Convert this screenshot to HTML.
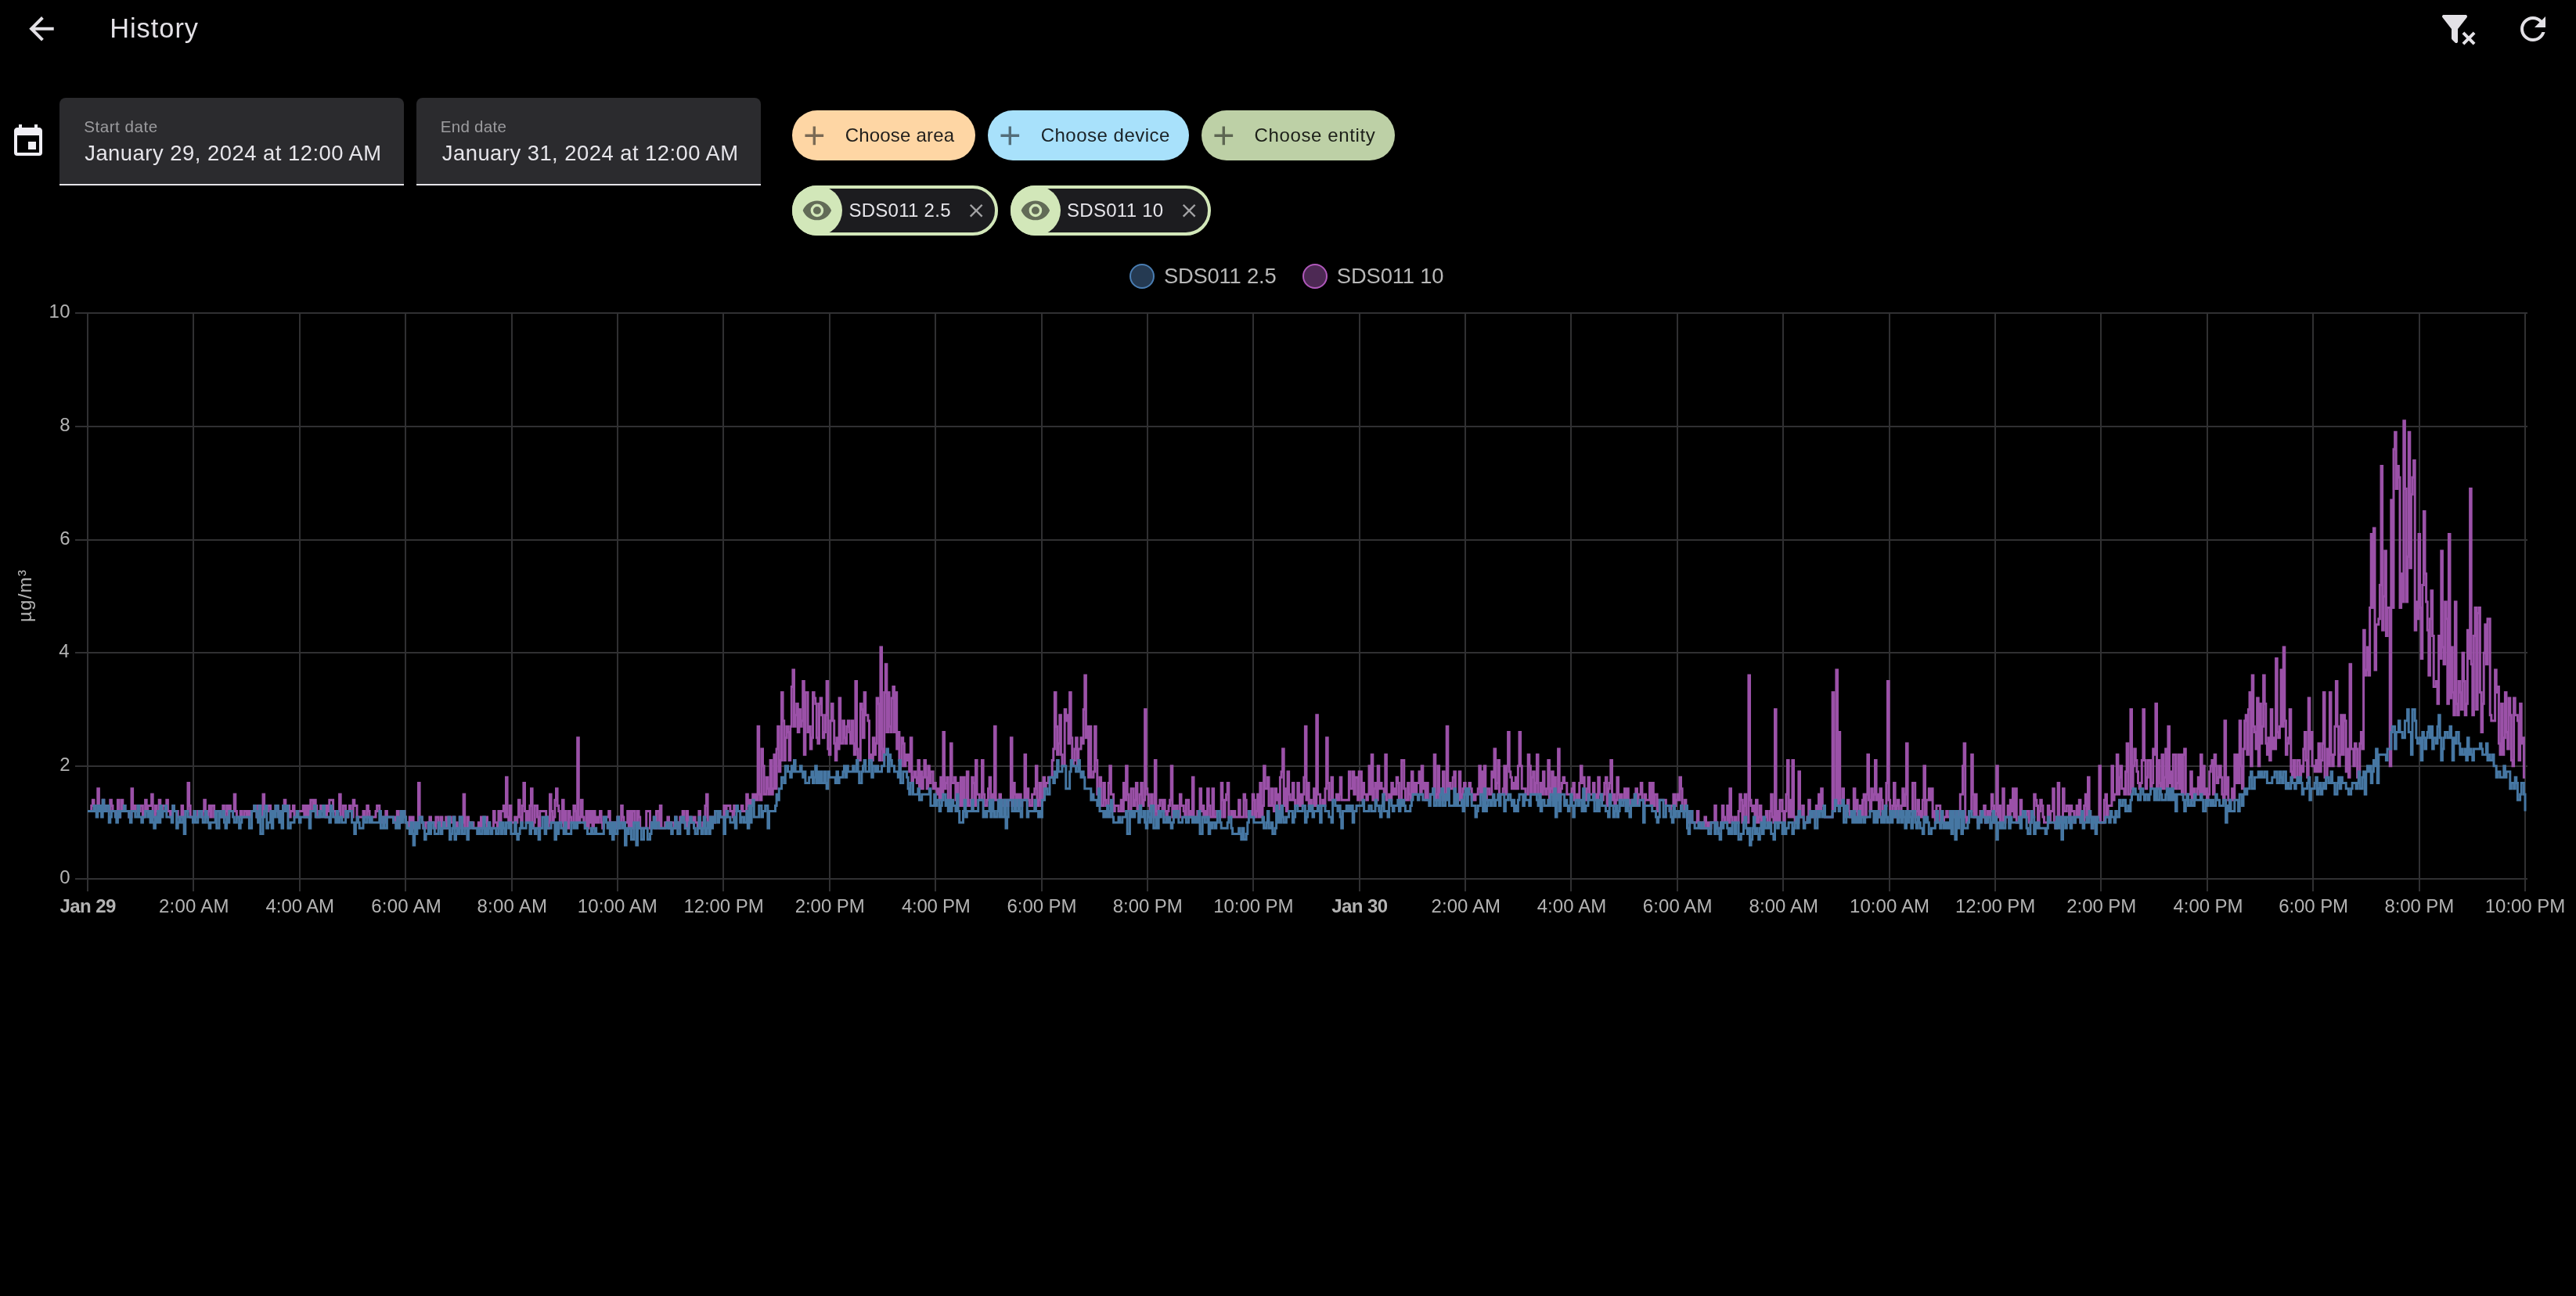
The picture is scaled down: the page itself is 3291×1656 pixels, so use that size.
<!DOCTYPE html><html lang="en"><head><meta charset="utf-8"><title>History</title><style>
html,body{margin:0;padding:0;background:#000;}
body{width:3291px;height:1656px;position:relative;overflow:hidden;font-family:"Liberation Sans", sans-serif;}
.t{position:absolute;white-space:pre;line-height:1;margin:0;padding:0;}
.ic{position:absolute;display:block;}
.box{position:absolute;top:125px;width:440px;height:110px;background:#2b2b2e;border-radius:8px 8px 0 0;border-bottom:2px solid #e6e5ea;}
.chip{position:absolute;height:64px;border-radius:32px;box-sizing:border-box;}
.echip{border:4px solid #d2e7b9;background:#1c1c1f;}
.lead{position:absolute;left:-4px;top:-4px;width:64px;height:64px;border-radius:32px;background:#d2e7b9;}
.dot{position:absolute;width:28px;height:28px;border-radius:50%;border:2px solid;top:337px;}
#chart{position:absolute;left:0;top:0;}
#root{position:absolute;left:0;top:0;width:3291px;height:1656px;will-change:transform;}
</style></head><body><div id="root">
<svg class="ic" style="left:28.55px;top:13.15px;width:47.70px;height:47.70px" viewBox="0 0 24 24"><path fill="#e3e1e6" d="M20,11V13H8L13.5,18.5L12.08,19.92L4.16,12L12.08,4.08L13.5,5.5L8,11H20Z"/></svg>
<svg class="ic" style="left:3116.00px;top:13.00px;width:48.00px;height:48.00px" viewBox="0 0 24 24"><path fill="#e3e1e6" d="M14.76,20.83L17.6,18L14.76,15.17L16.17,13.76L19,16.57L21.83,13.76L23.24,15.17L20.43,18L23.24,20.83L21.83,22.24L19,19.4L16.17,22.24L14.76,20.83M12,12V19.88C12.04,20.18 11.94,20.5 11.71,20.71C11.32,21.1 10.69,21.1 10.3,20.71L8.29,18.7C8.06,18.47 7.96,18.16 8,17.87V12H7.97L2.21,4.62C1.87,4.19 1.95,3.56 2.38,3.22C2.57,3.08 2.78,3 3,3V3H17V3C17.22,3 17.43,3.08 17.62,3.22C18.05,3.56 18.13,4.19 17.79,4.62L12.03,12H12Z"/></svg>
<svg class="ic" style="left:3212.00px;top:13.00px;width:48.00px;height:48.00px" viewBox="0 0 24 24"><path fill="#e3e1e6" d="M17.65,6.35C16.2,4.9 14.21,4 12,4A8,8 0 0,0 4,12A8,8 0 0,0 12,20C15.73,20 18.84,17.45 19.73,14H17.65C16.83,16.33 14.61,18 12,18A6,6 0 0,1 6,12A6,6 0 0,1 12,6C13.66,6 15.14,6.69 16.22,7.78L13,11H20V4L17.65,6.35Z"/></svg>
<svg class="ic" style="left:12.00px;top:156.80px;width:48.00px;height:48.00px" viewBox="0 0 24 24"><path fill="#f0eff5" d="M19,19H5V8H19M16,1V3H8V1H6V3H5C3.89,3 3,3.89 3,5V19A2,2 0 0,0 5,21H19A2,2 0 0,0 21,19V5C21,3.89 20.1,3 19,3H18V1M17,12H12V17H17V12Z"/></svg>
<div class="box" style="left:76px"></div><div class="box" style="left:532px"></div>
<div class="chip" style="left:1012px;top:141px;width:234px;background:#fed6a4"></div>
<svg class="ic" style="left:1019.70px;top:152.70px;width:40.60px;height:40.60px" viewBox="0 0 24 24"><path fill="#7a6a55" d="M19,13H13V19H11V13H5V11H11V5H13V11H19V13Z"/></svg>
<div class="chip" style="left:1262px;top:141px;width:257px;background:#a8e1fb"></div>
<svg class="ic" style="left:1269.90px;top:152.70px;width:40.60px;height:40.60px" viewBox="0 0 24 24"><path fill="#536d79" d="M19,13H13V19H11V13H5V11H11V5H13V11H19V13Z"/></svg>
<div class="chip" style="left:1535px;top:141px;width:247px;background:#bdd0a6"></div>
<svg class="ic" style="left:1542.70px;top:152.70px;width:40.60px;height:40.60px" viewBox="0 0 24 24"><path fill="#5d6652" d="M19,13H13V19H11V13H5V11H11V5H13V11H19V13Z"/></svg>
<div class="chip echip" style="left:1012px;top:237px;width:263px"><div class="lead"></div></div>
<svg class="ic" style="left:1024.20px;top:249.30px;width:39.80px;height:39.80px" viewBox="0 0 24 24"><path fill="#626b57" d="M12,9A3,3 0 0,0 9,12A3,3 0 0,0 12,15A3,3 0 0,0 15,12A3,3 0 0,0 12,9M12,17A5,5 0 0,1 7,12A5,5 0 0,1 12,7A5,5 0 0,1 17,12A5,5 0 0,1 12,17M12,4.5C7,4.5 2.73,7.61 1,12C2.73,16.39 7,19.5 12,19.5C17,19.5 21.27,16.39 23,12C21.27,7.61 17,4.5 12,4.5Z"/></svg>
<svg class="ic" style="left:1232.80px;top:254.80px;width:28.40px;height:28.40px" viewBox="0 0 24 24"><path fill="#a3a3a5" d="M19,6.41L17.59,5L12,10.59L6.41,5L5,6.41L10.59,12L5,17.59L6.41,19L12,13.41L17.59,19L19,17.59L13.41,12L19,6.41Z"/></svg>
<div class="chip echip" style="left:1291px;top:237px;width:256px"><div class="lead"></div></div>
<svg class="ic" style="left:1303.20px;top:249.30px;width:39.80px;height:39.80px" viewBox="0 0 24 24"><path fill="#626b57" d="M12,9A3,3 0 0,0 9,12A3,3 0 0,0 12,15A3,3 0 0,0 15,12A3,3 0 0,0 12,9M12,17A5,5 0 0,1 7,12A5,5 0 0,1 12,7A5,5 0 0,1 17,12A5,5 0 0,1 12,17M12,4.5C7,4.5 2.73,7.61 1,12C2.73,16.39 7,19.5 12,19.5C17,19.5 21.27,16.39 23,12C21.27,7.61 17,4.5 12,4.5Z"/></svg>
<svg class="ic" style="left:1504.80px;top:254.80px;width:28.40px;height:28.40px" viewBox="0 0 24 24"><path fill="#a3a3a5" d="M19,6.41L17.59,5L12,10.59L6.41,5L5,6.41L10.59,12L5,17.59L6.41,19L12,13.41L17.59,19L19,17.59L13.41,12L19,6.41Z"/></svg>
<div class="dot" style="left:1443px;background:#253a52;border-color:#4a7eb3"></div>
<div class="dot" style="left:1664px;background:#4d2954;border-color:#b058bb"></div>
<svg id="chart" width="3291" height="1656" viewBox="0 0 3291 1656" shape-rendering="crispEdges">
<rect x="96" y="399" width="3133" height="2" fill="#303032"/>
<rect x="96" y="544" width="3133" height="2" fill="#303032"/>
<rect x="96" y="689" width="3133" height="2" fill="#303032"/>
<rect x="96" y="833" width="3133" height="2" fill="#303032"/>
<rect x="96" y="978" width="3133" height="2" fill="#303032"/>
<rect x="96" y="1122" width="3133" height="2" fill="#303032"/>
<rect x="111" y="401" width="2" height="738" fill="#303032"/>
<rect x="246" y="401" width="2" height="738" fill="#303032"/>
<rect x="382" y="401" width="2" height="738" fill="#303032"/>
<rect x="517" y="401" width="2" height="738" fill="#303032"/>
<rect x="653" y="401" width="2" height="738" fill="#303032"/>
<rect x="788" y="401" width="2" height="738" fill="#303032"/>
<rect x="923" y="401" width="2" height="738" fill="#303032"/>
<rect x="1059" y="401" width="2" height="738" fill="#303032"/>
<rect x="1194" y="401" width="2" height="738" fill="#303032"/>
<rect x="1330" y="401" width="2" height="738" fill="#303032"/>
<rect x="1465" y="401" width="2" height="738" fill="#303032"/>
<rect x="1600" y="401" width="2" height="738" fill="#303032"/>
<rect x="1736" y="401" width="2" height="738" fill="#303032"/>
<rect x="1871" y="401" width="2" height="738" fill="#303032"/>
<rect x="2006" y="401" width="2" height="738" fill="#303032"/>
<rect x="2142" y="401" width="2" height="738" fill="#303032"/>
<rect x="2277" y="401" width="2" height="738" fill="#303032"/>
<rect x="2413" y="401" width="2" height="738" fill="#303032"/>
<rect x="2548" y="401" width="2" height="738" fill="#303032"/>
<rect x="2683" y="401" width="2" height="738" fill="#303032"/>
<rect x="2819" y="401" width="2" height="738" fill="#303032"/>
<rect x="2954" y="401" width="2" height="738" fill="#303032"/>
<rect x="3090" y="401" width="2" height="738" fill="#303032"/>
<rect x="3225" y="401" width="2" height="738" fill="#303032"/>
<g shape-rendering="auto" fill="none" stroke-width="3" stroke-linejoin="miter">
<path stroke="#9b51a8" d="M112.0 1036.6H116.8V1029.4H118.4V1022.2H120.0V1029.4H121.6V1036.6H124.8V1007.7H126.4V1036.6H128.0V1029.4H129.6V1036.6H131.2V1022.2H132.8V1029.4H134.4V1036.6H136.0V1029.4H139.2V1036.6H140.8V1022.2H142.4V1029.4H144.0V1036.6H148.8V1043.9H150.4V1022.2H152.0V1043.9H153.6V1036.6H155.2V1022.2H156.8V1036.6H158.4V1029.4H160.0V1036.6H164.8V1043.9H168.0V1007.7H169.6V1036.6H171.2V1029.4H172.8V1036.6H176.0V1029.4H177.6V1036.6H179.2V1029.4H182.4V1043.9H184.0V1036.6H185.6V1022.2H187.2V1036.6H188.8V1029.4H193.6V1015.0H195.2V1043.9H198.4V1029.4H200.0V1036.6H203.2V1022.2H204.8V1029.4H206.4V1036.6H208.0V1029.4H212.8V1022.2H214.4V1036.6H217.6V1043.9H219.2V1036.6H220.8V1029.4H222.4V1036.6H227.2V1043.9H232.0V1029.4H233.6V1043.9H236.8V1036.6H240.0V1000.5H241.6V1029.4H243.2V1043.9H248.0V1036.6H249.6V1043.9H252.8V1036.6H257.6V1043.9H259.2V1036.6H260.8V1022.2H262.4V1036.6H264.0V1043.9H265.6V1036.6H267.2V1029.4H268.8V1043.9H270.4V1029.4H273.6V1043.9H275.2V1036.6H281.6V1043.9H284.8V1029.4H286.4V1043.9H288.0V1036.6H289.6V1029.4H291.2V1043.9H292.8V1029.4H294.4V1036.6H299.2V1015.0H300.8V1036.6H302.4V1043.9H307.2V1036.6H308.8V1043.9H312.0V1036.6H315.2V1043.9H316.8V1036.6H318.4V1043.9H320.0V1036.6H324.8V1029.4H326.4V1036.6H328.0V1043.9H329.6V1029.4H332.8V1043.9H336.0V1015.0H337.6V1036.6H339.2V1029.4H340.8V1036.6H342.4V1029.4H345.6V1036.6H352.0V1029.4H355.2V1036.6H356.8V1043.9H358.4V1036.6H361.6V1029.4H363.2V1022.2H364.8V1036.6H366.4V1029.4H369.6V1043.9H371.2V1036.6H374.4V1029.4H376.0V1043.9H379.2V1036.6H387.2V1029.4H388.8V1043.9H390.4V1029.4H392.0V1043.9H393.6V1029.4H395.2V1043.9H396.8V1022.2H400.0V1036.6H401.6V1022.2H403.2V1029.4H404.8V1043.9H408.0V1036.6H409.6V1029.4H411.2V1036.6H412.8V1029.4H416.0V1043.9H417.6V1029.4H419.2V1036.6H420.8V1022.2H425.6V1036.6H428.8V1043.9H430.4V1036.6H433.6V1015.0H435.2V1043.9H438.4V1029.4H441.6V1036.6H443.2V1043.9H444.8V1036.6H446.4V1029.4H448.0V1036.6H449.6V1043.9H451.2V1022.2H452.8V1029.4H456.0V1043.9H464.0V1036.6H465.6V1043.9H468.8V1029.4H470.4V1036.6H472.0V1043.9H480.0V1036.6H481.6V1029.4H484.8V1036.6H486.4V1051.1H489.6V1043.9H491.2V1051.1H492.8V1036.6H494.4V1043.9H502.5V1051.1H504.1V1043.9H505.7V1051.1H507.3V1036.6H508.9V1043.9H510.5V1051.1H512.1V1036.6H513.7V1043.9H515.3V1036.6H516.9V1043.9H518.5V1051.1H521.7V1058.3H523.3V1043.9H524.9V1051.1H526.5V1043.9H528.1V1058.3H529.7V1051.1H534.5V1000.5H536.1V1043.9H539.3V1051.1H540.9V1058.3H544.1V1051.1H548.9V1043.9H550.5V1051.1H555.3V1058.3H556.9V1043.9H560.1V1051.1H561.7V1058.3H563.3V1043.9H564.9V1058.3H566.5V1051.1H568.1V1058.3H569.7V1043.9H571.3V1058.3H572.9V1043.9H576.1V1051.1H579.3V1043.9H580.9V1058.3H582.5V1051.1H584.1V1058.3H587.3V1043.9H590.5V1051.1H592.1V1015.0H593.7V1058.3H596.9V1043.9H598.5V1058.3H600.1V1051.1H604.9V1058.3H611.3V1051.1H612.9V1058.3H614.5V1043.9H616.1V1058.3H617.7V1043.9H619.3V1051.1H620.9V1043.9H622.5V1058.3H624.1V1051.1H625.7V1058.3H630.5V1036.6H632.1V1051.1H635.3V1058.3H636.9V1036.6H638.5V1051.1H640.1V1036.6H643.3V1029.4H644.9V1043.9H646.5V993.3H648.1V1043.9H649.7V1051.1H651.3V1029.4H652.9V1051.1H657.7V1043.9H659.3V1051.1H660.9V1043.9H662.5V1022.2H664.1V1043.9H665.7V1051.1H667.3V1029.4H668.9V1000.5H670.5V1036.6H672.1V1051.1H673.7V1036.6H675.3V1051.1H676.9V1029.4H678.5V1007.7H680.1V1058.3H681.7V1051.1H683.3V1029.4H686.5V1043.9H688.1V1058.3H689.7V1036.6H697.7V1043.9H699.3V1058.3H700.9V1051.1H702.5V1015.0H704.1V1036.6H705.7V1051.1H707.3V1043.9H708.9V1022.2H710.5V1007.7H712.1V1029.4H713.7V1036.6H715.3V1051.1H718.5V1022.2H720.1V1058.3H721.7V1036.6H723.3V1051.1H724.9V1058.3H726.5V1036.6H728.1V1043.9H729.7V1051.1H732.9V1029.4H734.5V1036.6H736.1V1051.1H737.7V942.7H739.3V1051.1H740.9V1043.9H742.5V1022.2H744.1V1043.9H745.7V1051.1H747.3V1058.3H748.9V1036.6H750.5V1058.3H752.1V1036.6H753.7V1051.1H755.3V1036.6H756.9V1058.3H758.5V1036.6H760.1V1051.1H761.7V1043.9H763.3V1051.1H764.9V1043.9H766.5V1036.6H768.1V1051.1H769.7V1058.3H771.3V1043.9H777.7V1036.6H779.3V1058.3H780.9V1051.1H785.7V1058.3H787.3V1051.1H788.9V1043.9H790.5V1058.3H792.1V1051.1H793.7V1029.4H795.3V1043.9H796.9V1051.1H801.7V1036.6H803.3V1058.3H804.9V1036.6H806.5V1058.3H808.1V1036.6H811.3V1051.1H812.9V1058.3H814.5V1036.6H816.1V1043.9H817.7V1058.3H825.7V1036.6H830.5V1058.3H832.1V1051.1H835.3V1043.9H836.9V1058.3H838.5V1036.6H841.7V1058.3H843.3V1029.4H844.9V1058.3H849.7V1051.1H852.9V1043.9H854.5V1058.3H856.1V1051.1H860.9V1058.3H862.5V1043.9H864.1V1051.1H865.7V1058.3H867.3V1051.1H868.9V1043.9H872.1V1036.6H873.7V1051.1H875.3V1058.3H876.9V1036.6H878.5V1058.3H880.1V1043.9H883.3V1051.1H886.5V1043.9H888.1V1051.1H891.3V1058.3H892.9V1036.6H894.5V1058.3H897.7V1051.1H899.3V1043.9H900.9V1029.4H902.5V1015.0H904.1V1051.1H907.3V1043.9H912.1V1051.1H913.7V1036.6H920.1V1043.9H924.9V1029.4H926.5V1043.9H928.1V1029.4H932.9V1036.6H936.1V1043.9H937.7V1029.4H939.3V1036.6H940.9V1029.4H942.5V1036.6H947.3V1029.4H948.9V1036.6H953.7V1015.0H955.3V1029.4H956.9V1022.2H958.5V1029.4H960.1V1022.2H961.7V1015.0H963.3V1022.2H964.9V1015.0H966.5V1022.2H968.1V928.2H969.7V1015.0H971.3V1022.2H972.9V957.1H974.5V978.8H976.1V1015.0H979.3V993.3H980.9V1007.7H982.5V1015.0H984.1V971.6H985.7V1015.0H987.3V1007.7H988.9V964.3H990.5V1007.7H992.1V957.1H993.7V928.2H995.3V986.0H996.9V971.6H998.5V884.8H1000.1V921.0H1001.7V971.6H1003.3V942.7H1004.9V928.2H1006.5V935.4H1008.1V971.6H1009.7V928.2H1011.3V877.6H1012.9V855.9H1014.5V928.2H1016.1V913.7H1017.7V899.3H1019.3V935.4H1020.9V906.5H1022.5V928.2H1024.1V921.0H1025.7V870.4H1027.3V964.3H1028.9V884.8H1032.1V935.4H1033.7V928.2H1035.3V957.1H1036.9V942.7H1038.5V884.8H1040.1V892.0H1041.7V899.3H1043.3V942.7H1044.9V949.9H1046.5V899.3H1048.1V892.0H1049.7V913.7H1051.3V942.7H1052.9V935.4H1054.5V913.7H1056.1V870.4H1057.7V957.1H1059.3V964.3H1060.9V921.0H1062.5V899.3H1064.1V921.0H1065.7V949.9H1067.3V971.6H1068.9V942.7H1070.5V957.1H1072.1V892.0H1073.7V949.9H1076.9V921.0H1078.5V942.7H1080.1V949.9H1081.7V928.2H1083.3V921.0H1084.9V935.4H1086.5V949.9H1088.1V921.0H1089.7V949.9H1091.3V964.3H1092.9V870.4H1094.5V957.1H1096.1V971.6H1099.3V899.3H1100.9V906.5H1102.5V942.7H1104.1V884.8H1105.7V913.7H1108.9V921.0H1110.5V971.6H1112.1V964.3H1113.7V971.6H1115.3V942.7H1116.9V964.3H1118.5V949.9H1120.1V892.0H1121.7V899.3H1123.3V971.6H1124.9V827.0H1126.5V957.1H1128.1V971.6H1129.7V884.8H1131.3V848.7H1132.9V935.4H1134.5V884.8H1136.1V928.2H1137.7V935.4H1139.3V892.0H1140.9V877.6H1142.5V935.4H1144.1V884.8H1145.7V957.1H1147.3V935.4H1148.9V971.6H1150.5V978.8H1152.1V942.7H1153.7V949.9H1155.3V978.8H1156.9V964.3H1158.5V971.6H1160.1V964.3H1161.7V986.0H1163.3V942.7H1164.9V1000.5H1166.5V993.3H1168.1V986.0H1169.7V993.3H1171.3V1000.5H1172.9V971.6H1174.5V1007.7H1176.1V986.0H1177.7V1007.7H1179.3V993.3H1180.9V971.6H1182.5V993.3H1184.1V1007.7H1185.7V978.8H1187.3V1000.5H1188.9V986.0H1192.1V1007.7H1193.7V1000.5H1195.3V1007.7H1196.9V1015.0H1198.5V1007.7H1200.1V1022.2H1201.7V993.3H1203.3V1022.2H1204.9V935.4H1206.5V1007.7H1208.1V1000.5H1209.7V993.3H1211.3V1029.4H1212.9V1022.2H1214.5V949.9H1216.1V1000.5H1219.3V993.3H1220.9V1022.2H1222.5V1000.5H1224.1V1029.4H1227.3V993.3H1228.9V1029.4H1230.5V993.3H1232.1V1022.2H1233.7V1029.4H1235.3V986.0H1236.9V1029.4H1240.1V1022.2H1241.7V993.3H1243.3V1000.5H1244.9V1029.4H1246.5V971.6H1248.1V1015.0H1251.3V1022.2H1254.5V971.6H1256.1V1015.0H1257.7V1029.4H1260.9V1022.2H1262.5V1007.7H1264.1V993.3H1265.7V1022.2H1267.3V1015.0H1268.9V1022.2H1270.5V928.2H1272.1V1022.2H1276.9V1015.0H1278.5V1022.2H1280.2V1029.4H1283.4V1022.2H1286.6V1029.4H1288.2V1022.2H1291.4V942.7H1293.0V1029.4H1294.6V1000.5H1296.2V1015.0H1297.8V1029.4H1299.4V1015.0H1301.0V1022.2H1302.6V1015.0H1304.2V1029.4H1305.8V1022.2H1309.0V964.3H1310.6V1022.2H1312.2V1007.7H1313.8V1022.2H1315.4V1029.4H1318.6V1015.0H1321.8V1007.7H1323.4V978.8H1325.0V1029.4H1326.6V1022.2H1328.2V1000.5H1329.8V1029.4H1331.4V1022.2H1333.0V993.3H1334.6V1007.7H1336.2V1000.5H1339.4V993.3H1344.2V971.6H1345.8V957.1H1347.4V884.8H1349.0V928.2H1350.6V964.3H1352.2V949.9H1353.8V913.7H1355.4V964.3H1357.0V978.8H1360.2V906.5H1361.8V921.0H1363.4V913.7H1365.0V949.9H1366.6V884.8H1368.2V942.7H1369.8V978.8H1371.4V971.6H1373.0V957.1H1374.6V942.7H1376.2V978.8H1377.8V957.1H1381.0V942.7H1382.6V949.9H1384.2V906.5H1385.8V863.1H1387.4V942.7H1389.0V928.2H1390.6V993.3H1392.2V928.2H1393.8V993.3H1397.0V986.0H1398.6V928.2H1400.2V971.6H1401.8V1015.0H1403.4V1007.7H1405.0V993.3H1406.6V1029.4H1409.8V1000.5H1411.4V1022.2H1413.0V1029.4H1416.2V1000.5H1417.8V978.8H1419.4V1015.0H1422.6V1036.6H1424.2V1029.4H1429.0V1036.6H1432.2V1022.2H1433.8V1036.6H1435.4V1000.5H1437.0V1022.2H1438.6V978.8H1440.2V1015.0H1441.8V1036.6H1445.0V1007.7H1448.2V1029.4H1449.8V1022.2H1451.4V1000.5H1453.0V1036.6H1454.6V1029.4H1456.2V1015.0H1457.8V1000.5H1459.4V1029.4H1461.0V1022.2H1462.6V906.5H1464.2V1007.7H1465.8V1015.0H1467.4V1029.4H1469.0V1036.6H1470.6V1015.0H1472.2V1029.4H1473.8V1043.9H1475.4V971.6H1477.0V1036.6H1478.6V1043.9H1480.2V1029.4H1481.8V1022.2H1485.0V1036.6H1486.6V1022.2H1488.2V1036.6H1489.8V1043.9H1491.4V1036.6H1493.0V1029.4H1494.6V1022.2H1496.2V978.8H1497.8V1043.9H1499.4V1029.4H1501.0V1043.9H1502.6V1029.4H1504.2V1036.6H1505.8V1043.9H1507.4V1015.0H1509.0V1029.4H1512.2V1036.6H1513.8V1043.9H1515.4V1022.2H1518.6V1043.9H1520.2V1036.6H1521.8V1043.9H1523.4V993.3H1525.0V1043.9H1529.8V1036.6H1533.0V1007.7H1534.6V1036.6H1536.2V1029.4H1537.8V1043.9H1539.4V1036.6H1541.0V1043.9H1542.6V1007.7H1544.2V1029.4H1545.8V1043.9H1549.0V1007.7H1550.6V1043.9H1553.8V1036.6H1558.6V1043.9H1560.2V1000.5H1561.8V1022.2H1563.4V1043.9H1565.0V1022.2H1566.6V1015.0H1568.2V1000.5H1569.8V1043.9H1573.0V1036.6H1574.6V1043.9H1576.2V1036.6H1577.8V1043.9H1582.6V1022.2H1584.2V1043.9H1589.0V1015.0H1590.6V1022.2H1592.2V1043.9H1595.4V1036.6H1598.6V1043.9H1600.2V1015.0H1601.8V1022.2H1603.4V1043.9H1605.0V1036.6H1606.6V1015.0H1608.2V1043.9H1609.8V1000.5H1611.4V1043.9H1613.0V1029.4H1614.6V978.8H1616.2V1007.7H1619.4V993.3H1621.0V1029.4H1624.2V1007.7H1625.8V1029.4H1627.4V1036.6H1629.0V1007.7H1630.6V1022.2H1632.2V1015.0H1633.8V1036.6H1635.4V993.3H1637.0V986.0H1638.6V957.1H1640.2V1029.4H1641.8V1007.7H1643.4V1036.6H1645.0V986.0H1646.6V1015.0H1648.2V1022.2H1651.4V1000.5H1653.0V1022.2H1654.6V1029.4H1657.8V1000.5H1659.4V1029.4H1661.0V1015.0H1662.6V1029.4H1664.2V1015.0H1665.8V993.3H1667.4V928.2H1669.0V1022.2H1670.6V1000.5H1672.2V1029.4H1673.8V1022.2H1675.4V1029.4H1678.6V1007.7H1680.2V1029.4H1681.8V913.7H1683.4V1015.0H1686.6V1029.4H1689.8V1022.2H1691.4V1029.4H1693.0V1007.7H1694.6V942.7H1696.2V1000.5H1697.8V1022.2H1701.0V993.3H1702.6V1022.2H1707.4V1015.0H1709.0V1022.2H1710.6V1015.0H1712.2V993.3H1713.8V1022.2H1723.4V986.0H1725.0V1007.7H1728.2V986.0H1729.8V1015.0H1731.4V993.3H1734.6V1022.2H1736.2V986.0H1739.4V1022.2H1741.0V1000.5H1742.6V1015.0H1745.8V1022.2H1747.4V1015.0H1749.0V978.8H1750.6V1015.0H1752.2V964.3H1753.8V1022.2H1755.4V1007.7H1757.0V1000.5H1758.6V1022.2H1760.2V978.8H1761.8V1007.7H1763.4V1000.5H1765.0V1007.7H1768.2V1015.0H1769.8V964.3H1771.4V1022.2H1774.6V1015.0H1776.2V1022.2H1777.8V1000.5H1779.4V1015.0H1781.0V1007.7H1782.6V1015.0H1784.2V993.3H1785.8V1000.5H1787.4V1022.2H1790.6V971.6H1793.8V1007.7H1795.4V1022.2H1798.6V1000.5H1800.2V1015.0H1801.8V1022.2H1803.4V986.0H1805.0V1015.0H1806.6V1000.5H1808.2V1015.0H1809.8V1000.5H1813.0V986.0H1814.6V1015.0H1816.2V978.8H1817.8V1007.7H1819.4V1000.5H1821.0V1022.2H1822.6V1000.5H1824.2V1022.2H1827.4V1015.0H1830.6V1007.7H1832.2V964.3H1833.8V1022.2H1835.4V1015.0H1837.0V978.8H1838.6V1022.2H1840.2V1015.0H1841.8V1007.7H1843.4V986.0H1845.0V1022.2H1846.6V1015.0H1848.2V928.2H1849.8V1007.7H1851.4V1000.5H1853.0V1007.7H1856.2V993.3H1857.8V986.0H1859.4V1022.2H1861.0V1015.0H1862.6V1022.2H1864.2V986.0H1865.8V1022.2H1867.4V1015.0H1869.0V1007.7H1870.6V1000.5H1872.2V1007.7H1873.8V1015.0H1875.4V1007.7H1877.0V1000.5H1878.6V1007.7H1880.2V1022.2H1881.8V1015.0H1883.4V1022.2H1885.0V1015.0H1888.2V1007.7H1889.8V978.8H1891.4V1015.0H1893.0V986.0H1894.6V1022.2H1896.2V978.8H1897.8V1022.2H1899.4V1007.7H1902.6V1015.0H1905.8V986.0H1907.4V993.3H1909.0V957.1H1910.6V1007.7H1912.2V1000.5H1913.8V971.6H1915.4V1015.0H1920.2V1007.7H1921.8V978.8H1923.4V1015.0H1925.0V978.8H1926.6V935.4H1928.2V986.0H1929.8V993.3H1931.4V1007.7H1933.0V1000.5H1934.6V1007.7H1936.2V993.3H1937.8V1007.7H1939.4V978.8H1941.0V935.4H1942.6V978.8H1944.2V1007.7H1949.0V1015.0H1952.2V964.3H1953.8V978.8H1955.4V1015.0H1957.0V993.3H1958.6V986.0H1960.2V1015.0H1961.8V1000.5H1963.4V964.3H1965.0V1015.0H1968.2V1000.5H1969.8V1015.0H1971.4V986.0H1973.0V1007.7H1974.6V1015.0H1976.2V1007.7H1977.8V971.6H1979.4V1022.2H1981.0V1007.7H1982.6V986.0H1984.2V1015.0H1985.8V993.3H1987.4V1015.0H1989.0V1022.2H1990.6V957.1H1992.2V1022.2H1993.8V1007.7H1995.4V1000.5H1997.0V993.3H1998.6V1000.5H2001.8V1015.0H2008.2V1007.7H2009.8V1000.5H2011.4V1022.2H2014.6V1015.0H2016.2V1022.2H2017.8V1000.5H2019.4V978.8H2021.0V1000.5H2022.6V993.3H2024.2V1007.7H2025.8V1022.2H2027.4V1007.7H2029.0V993.3H2030.6V1015.0H2035.4V1000.5H2037.0V1022.2H2038.6V1015.0H2040.2V1022.2H2041.8V993.3H2043.4V1015.0H2046.6V1022.2H2048.2V1015.0H2049.8V1000.5H2051.4V993.3H2053.0V1029.4H2054.6V1007.7H2056.2V1000.5H2057.8V971.6H2059.5V1022.2H2061.1V1015.0H2062.7V1029.4H2064.3V1022.2H2065.9V993.3H2067.5V1015.0H2069.1V1022.2H2070.7V1015.0H2072.3V1022.2H2075.5V1007.7H2077.1V1029.4H2078.7V1007.7H2080.3V1022.2H2081.9V1029.4H2085.1V1022.2H2086.7V1029.4H2088.3V1015.0H2089.9V1007.7H2091.5V1029.4H2093.1V1015.0H2096.3V1000.5H2097.9V1022.2H2099.5V1029.4H2101.1V1015.0H2102.7V1022.2H2107.5V1000.5H2109.1V1029.4H2110.7V1000.5H2112.3V1029.4H2113.9V1015.0H2117.1V1036.6H2118.7V1022.2H2128.3V1029.4H2133.1V1036.6H2134.7V1029.4H2137.9V1015.0H2139.5V1029.4H2141.1V1022.2H2142.7V1015.0H2144.3V1022.2H2145.9V993.3H2147.5V1007.7H2149.1V1036.6H2152.3V1022.2H2153.9V1029.4H2155.5V1051.1H2158.7V1036.6H2161.9V1051.1H2168.3V1036.6H2169.9V1051.1H2173.1V1058.3H2174.7V1051.1H2176.3V1058.3H2177.9V1043.9H2179.5V1051.1H2181.1V1058.3H2182.7V1051.1H2184.3V1058.3H2185.9V1051.1H2190.7V1029.4H2192.3V1051.1H2193.9V1058.3H2198.7V1051.1H2200.3V1029.4H2201.9V1043.9H2203.5V1051.1H2206.7V1029.4H2208.3V1051.1H2209.9V1007.7H2211.5V1043.9H2213.1V1051.1H2216.3V1043.9H2217.9V1051.1H2221.1V1036.6H2222.7V1015.0H2224.3V1022.2H2225.9V1051.1H2227.5V1029.4H2229.1V1015.0H2230.7V1051.1H2233.9V863.1H2235.5V1022.2H2237.1V1029.4H2238.7V1036.6H2240.3V1029.4H2241.9V1051.1H2243.5V1022.2H2245.1V1051.1H2246.7V1043.9H2248.3V1029.4H2249.9V1051.1H2251.5V1043.9H2256.3V1036.6H2257.9V1051.1H2261.1V1036.6H2262.7V1015.0H2264.3V1043.9H2265.9V1051.1H2267.5V906.5H2269.1V1051.1H2270.7V1036.6H2272.3V1051.1H2273.9V1022.2H2277.1V1036.6H2278.7V1051.1H2280.3V1036.6H2281.9V1015.0H2283.5V971.6H2285.1V1043.9H2286.7V1022.2H2288.3V1043.9H2289.9V971.6H2291.5V1043.9H2293.1V1051.1H2294.7V1043.9H2296.3V1051.1H2297.9V986.0H2299.5V1043.9H2302.7V1029.4H2304.3V1051.1H2309.1V1043.9H2310.7V1022.2H2312.3V1036.6H2313.9V1043.9H2315.5V1036.6H2318.7V1043.9H2320.3V1029.4H2321.9V1036.6H2323.5V1015.0H2325.1V1036.6H2326.7V1007.7H2328.3V1029.4H2331.5V1043.9H2341.1V884.8H2342.7V1036.6H2344.3V1022.2H2345.9V855.9H2347.5V1029.4H2349.1V935.4H2350.7V1022.2H2352.3V1029.4H2353.9V1007.7H2355.5V1043.9H2357.1V1036.6H2358.7V1029.4H2360.3V1022.2H2361.9V1036.6H2363.5V1043.9H2365.1V1036.6H2366.7V1043.9H2368.3V1007.7H2369.9V1036.6H2371.5V1022.2H2373.1V1043.9H2374.7V1036.6H2376.3V1029.4H2377.9V1043.9H2379.5V1022.2H2381.1V1015.0H2382.7V1043.9H2384.3V1015.0H2385.9V964.3H2387.5V1022.2H2389.1V1036.6H2390.7V1007.7H2392.3V1022.2H2393.9V1015.0H2395.5V971.6H2397.1V1022.2H2398.7V1015.0H2400.3V1043.9H2401.9V1007.7H2403.5V1022.2H2405.1V1036.6H2406.7V1043.9H2408.3V1029.4H2409.9V1000.5H2411.5V870.4H2413.1V1022.2H2414.7V1036.6H2416.3V1043.9H2417.9V1029.4H2419.5V1000.5H2421.1V1043.9H2422.7V1029.4H2424.3V1022.2H2425.9V1043.9H2427.5V1036.6H2429.1V1029.4H2430.7V1007.7H2432.3V1029.4H2433.9V1015.0H2435.5V949.9H2437.1V1036.6H2443.5V1000.5H2446.7V1043.9H2448.3V1036.6H2449.9V1022.2H2451.5V1043.9H2453.1V1036.6H2454.7V1043.9H2456.3V1022.2H2457.9V978.8H2459.5V1043.9H2461.1V1022.2H2464.3V1007.7H2465.9V1022.2H2467.5V1007.7H2469.1V1043.9H2470.7V1036.6H2472.3V1051.1H2473.9V1029.4H2478.7V1051.1H2480.3V1036.6H2481.9V1051.1H2483.5V1043.9H2486.7V1036.6H2488.3V1043.9H2491.5V1036.6H2493.1V1043.9H2494.7V1036.6H2496.3V1043.9H2499.5V1036.6H2502.7V1043.9H2504.3V1015.0H2507.5V978.8H2509.1V949.9H2510.7V1043.9H2512.3V1051.1H2513.9V1043.9H2515.5V1036.6H2518.7V964.3H2520.3V1015.0H2521.9V1043.9H2523.5V1015.0H2525.1V1043.9H2526.7V1051.1H2528.3V1043.9H2529.9V1036.6H2533.1V1043.9H2534.7V1029.4H2536.3V1051.1H2537.9V1043.9H2539.5V1036.6H2541.1V1043.9H2542.7V1036.6H2544.3V1015.0H2545.9V1029.4H2547.5V1051.1H2549.1V1036.6H2550.7V978.8H2552.3V1043.9H2553.9V1029.4H2555.5V1051.1H2558.7V1007.7H2560.3V1051.1H2561.9V1043.9H2565.1V1029.4H2566.7V1051.1H2568.3V1022.2H2569.9V1036.6H2571.5V1007.7H2573.1V1043.9H2574.7V1007.7H2576.3V1051.1H2579.5V1043.9H2581.1V1022.2H2582.7V1043.9H2584.3V1036.6H2587.5V1043.9H2589.1V1036.6H2592.3V1051.1H2595.5V1036.6H2597.1V1043.9H2598.7V1015.0H2600.3V1022.2H2601.9V1029.4H2603.5V1051.1H2605.1V1036.6H2606.7V1022.2H2608.3V1029.4H2609.9V1043.9H2611.5V1051.1H2616.3V1029.4H2617.9V1051.1H2619.5V1036.6H2622.7V1007.7H2624.3V1051.1H2625.9V1058.3H2627.5V1043.9H2629.1V1000.5H2630.7V1051.1H2632.3V1043.9H2633.9V1058.3H2635.5V1007.7H2637.1V1036.6H2640.3V1029.4H2643.5V1051.1H2645.1V1029.4H2646.7V1036.6H2649.9V1051.1H2651.5V1043.9H2653.1V1029.4H2654.7V1043.9H2656.3V1022.2H2657.9V1051.1H2659.5V1036.6H2661.1V1051.1H2662.7V1029.4H2664.3V1015.0H2665.9V1043.9H2667.5V993.3H2669.1V1036.6H2670.7V1043.9H2672.3V1058.3H2673.9V1043.9H2675.5V1051.1H2677.1V1043.9H2681.9V978.8H2683.5V1051.1H2688.3V1022.2H2689.9V1015.0H2691.5V1043.9H2693.1V1029.4H2697.9V978.8H2699.5V1022.2H2701.1V1015.0H2704.3V964.3H2705.9V1015.0H2707.5V993.3H2709.1V978.8H2710.7V1007.7H2713.9V1015.0H2715.5V986.0H2717.1V949.9H2718.7V1015.0H2721.9V906.5H2723.5V1007.7H2725.1V978.8H2726.7V957.1H2728.3V971.6H2729.9V986.0H2731.5V1000.5H2733.1V1007.7H2734.7V1000.5H2736.3V971.6H2737.9V906.5H2739.5V971.6H2741.1V1007.7H2742.7V993.3H2744.3V971.6H2747.5V1007.7H2749.1V1000.5H2750.7V957.1H2752.3V964.3H2753.9V899.3H2755.5V1007.7H2757.1V971.6H2758.7V1000.5H2760.3V1007.7H2761.9V964.3H2763.5V1007.7H2765.1V993.3H2766.7V957.1H2768.3V1007.7H2769.9V928.2H2771.5V1000.5H2773.1V986.0H2774.7V1007.7H2776.3V964.3H2779.5V1007.7H2781.1V1000.5H2782.7V964.3H2784.3V1007.7H2785.9V964.3H2787.5V1015.0H2789.1V964.3H2790.7V957.1H2792.3V1015.0H2798.7V986.0H2800.3V1022.2H2801.9V1007.7H2803.5V1015.0H2806.7V1007.7H2808.3V993.3H2809.9V1015.0H2811.5V964.3H2813.1V1015.0H2814.7V978.8H2816.3V1015.0H2817.9V1007.7H2819.5V1022.2H2821.1V1015.0H2822.7V986.0H2824.3V978.8H2825.9V971.6H2827.5V1015.0H2829.1V964.3H2830.7V978.8H2832.3V1000.5H2833.9V993.3H2835.5V978.8H2837.2V993.3H2838.8V1015.0H2840.4V1022.2H2842.0V921.0H2843.6V1015.0H2845.2V993.3H2846.8V1022.2H2851.6V1007.7H2853.2V1022.2H2854.8V964.3H2856.4V1000.5H2858.0V964.3H2859.6V1000.5H2861.2V921.0H2862.8V978.8H2864.4V1007.7H2866.0V957.1H2867.6V921.0H2869.2V913.7H2870.8V964.3H2872.4V906.5H2874.0V884.8H2875.6V978.8H2877.2V863.1H2878.8V928.2H2880.4V935.4H2882.0V957.1H2883.6V892.0H2885.2V978.8H2886.8V899.3H2888.4V949.9H2890.0V928.2H2891.6V863.1H2893.2V899.3H2894.8V949.9H2896.4V964.3H2898.0V942.7H2899.6V971.6H2901.2V906.5H2902.8V957.1H2904.4V942.7H2906.0V957.1H2907.6V841.4H2909.2V935.4H2910.8V942.7H2912.4V928.2H2914.0V855.9H2915.6V928.2H2917.2V827.0H2918.8V921.0H2920.4V964.3H2922.0V949.9H2923.6V942.7H2925.2V906.5H2926.8V986.0H2928.4V993.3H2930.0V971.6H2931.6V993.3H2934.8V971.6H2938.0V993.3H2939.6V978.8H2941.2V986.0H2942.8V957.1H2944.4V935.4H2946.0V971.6H2947.6V993.3H2949.2V892.0H2950.8V957.1H2952.4V935.4H2954.0V978.8H2957.2V986.0H2958.8V971.6H2960.4V986.0H2962.0V949.9H2963.6V986.0H2965.2V971.6H2966.8V949.9H2968.4V884.8H2970.0V993.3H2973.2V957.1H2974.8V978.8H2976.4V884.8H2978.0V964.3H2979.6V978.8H2981.2V964.3H2982.8V928.2H2984.4V870.4H2986.0V928.2H2987.6V978.8H2989.2V964.3H2990.8V913.7H2992.4V964.3H2994.0V913.7H2995.6V921.0H2997.2V986.0H2998.8V957.1H3000.4V993.3H3002.0V848.7H3003.6V957.1H3006.8V978.8H3008.4V949.9H3010.0V957.1H3011.6V993.3H3013.2V986.0H3014.8V949.9H3016.4V935.4H3018.0V957.1H3019.6V805.3H3021.2V863.1H3022.8V855.9H3024.4V827.0H3026.0V863.1H3027.6V776.4H3029.2V682.4H3030.8V776.4H3032.4V675.1H3034.0V855.9H3035.6V798.1H3038.8V790.8H3040.4V747.4H3042.0V595.6H3043.6V805.3H3045.2V761.9H3046.8V704.1H3048.4V812.5H3050.0V776.4H3053.2V978.8H3054.8V639.0H3056.4V776.4H3058.0V573.9H3059.6V552.2H3061.2V624.5H3062.8V595.6H3064.4V610.1H3066.0V776.4H3067.6V733.0H3069.2V769.1H3070.8V537.8H3072.4V624.5H3074.0V769.1H3075.6V711.3H3077.2V552.2H3078.8V725.8H3080.4V631.8H3082.0V610.1H3083.6V588.4H3085.2V805.3H3086.8V769.1H3088.4V790.8H3090.0V682.4H3091.6V776.4H3093.2V841.4H3094.8V747.4H3096.4V653.5H3098.0V733.0H3099.6V769.1H3101.2V805.3H3102.8V863.1H3104.4V790.8H3106.0V754.7H3107.6V812.5H3109.2V877.6H3112.4V870.4H3114.0V899.3H3115.6V812.5H3117.2V841.4H3118.8V704.1H3120.4V827.0H3122.0V848.7H3123.6V769.1H3125.2V790.8H3126.8V899.3H3128.4V682.4H3130.0V892.0H3131.6V827.0H3133.2V884.8H3134.8V913.7H3136.4V769.1H3138.0V899.3H3139.6V913.7H3141.2V870.4H3142.8V884.8H3144.4V906.5H3146.0V834.2H3147.6V870.4H3149.2V913.7H3150.8V899.3H3152.4V805.3H3154.0V841.4H3155.6V624.5H3157.2V848.7H3158.8V913.7H3160.4V812.5H3162.0V776.4H3163.6V906.5H3165.2V783.6H3166.8V776.4H3168.4V884.8H3170.0V935.4H3171.6V899.3H3173.2V834.2H3174.8V798.1H3176.4V848.7H3178.0V790.8H3181.2V913.7H3182.8V921.0H3187.6V855.9H3189.2V884.8H3190.8V877.6H3192.4V949.9H3194.0V964.3H3195.6V899.3H3197.2V964.3H3198.8V942.7H3200.4V884.8H3202.0V935.4H3203.6V957.1H3205.2V892.0H3206.8V913.7H3208.4V971.6H3210.0V978.8H3211.6V892.0H3213.2V913.7H3216.4V921.0H3218.0V971.6H3219.6V899.3H3221.2V949.9H3222.8V942.7H3224.4V993.3H3226.0"/>
<path stroke="#4677a3" d="M112.0 1036.6H120.0V1029.4H121.6V1036.6H123.2V1043.9H124.8V1029.4H126.4V1036.6H128.0V1029.4H129.6V1043.9H131.2V1022.2H132.8V1036.6H136.0V1029.4H139.2V1051.1H140.8V1043.9H142.4V1036.6H147.2V1043.9H148.8V1051.1H150.4V1036.6H152.0V1043.9H153.6V1036.6H158.4V1029.4H160.0V1036.6H164.8V1043.9H166.4V1051.1H168.0V1036.6H172.8V1043.9H176.0V1029.4H177.6V1043.9H180.8V1051.1H182.4V1043.9H185.6V1036.6H188.8V1043.9H190.4V1036.6H192.0V1051.1H193.6V1036.6H195.2V1051.1H196.8V1058.3H198.4V1043.9H200.0V1051.1H201.6V1036.6H203.2V1051.1H204.8V1029.4H206.4V1043.9H208.0V1036.6H211.2V1029.4H212.8V1043.9H219.2V1051.1H220.8V1029.4H222.4V1036.6H225.6V1058.3H227.2V1051.1H228.8V1043.9H230.4V1051.1H233.6V1043.9H235.2V1065.6H236.8V1036.6H240.0V1043.9H246.4V1051.1H248.0V1036.6H249.6V1051.1H252.8V1043.9H254.4V1036.6H257.6V1043.9H259.2V1051.1H262.4V1036.6H264.0V1043.9H265.6V1051.1H267.2V1058.3H268.8V1051.1H275.2V1036.6H276.8V1058.3H280.0V1036.6H281.6V1043.9H284.8V1036.6H286.4V1051.1H288.0V1058.3H289.6V1043.9H291.2V1051.1H292.8V1036.6H297.6V1043.9H299.2V1051.1H302.4V1043.9H305.6V1058.3H307.2V1051.1H308.8V1043.9H318.4V1058.3H321.6V1036.6H324.8V1029.4H326.4V1036.6H328.0V1043.9H329.6V1051.1H331.2V1029.4H332.8V1065.6H336.0V1043.9H337.6V1036.6H339.2V1029.4H340.8V1058.3H342.4V1051.1H345.6V1036.6H347.2V1058.3H348.8V1036.6H350.4V1043.9H352.0V1029.4H355.2V1043.9H356.8V1051.1H358.4V1036.6H360.0V1058.3H361.6V1029.4H363.2V1036.6H366.4V1029.4H368.0V1058.3H371.2V1051.1H376.0V1043.9H379.2V1036.6H380.8V1043.9H382.4V1051.1H384.0V1043.9H395.2V1058.3H396.8V1036.6H401.6V1029.4H403.2V1043.9H408.0V1036.6H409.6V1043.9H412.8V1029.4H414.4V1043.9H420.8V1051.1H422.4V1029.4H424.0V1036.6H425.6V1043.9H428.8V1051.1H430.4V1036.6H432.0V1051.1H433.6V1043.9H436.8V1051.1H441.6V1036.6H443.2V1043.9H444.8V1036.6H449.6V1051.1H452.8V1065.6H454.4V1051.1H456.0V1043.9H457.6V1051.1H459.2V1058.3H464.0V1043.9H465.6V1051.1H468.8V1043.9H472.0V1051.1H473.6V1043.9H475.2V1051.1H484.8V1036.6H486.4V1058.3H489.6V1043.9H491.2V1058.3H494.4V1043.9H502.5V1051.1H505.7V1058.3H507.3V1043.9H508.9V1058.3H510.5V1051.1H512.1V1036.6H513.7V1051.1H515.3V1036.6H516.9V1043.9H518.5V1051.1H520.1V1058.3H523.3V1065.6H524.9V1051.1H526.5V1065.6H528.1V1080.0H529.7V1051.1H531.3V1065.6H532.9V1051.1H534.5V1058.3H536.1V1043.9H539.3V1051.1H540.9V1058.3H542.5V1072.8H544.1V1065.6H547.3V1051.1H548.9V1065.6H550.5V1051.1H553.7V1058.3H555.3V1065.6H560.1V1051.1H561.7V1058.3H563.3V1065.6H564.9V1058.3H566.5V1051.1H568.1V1058.3H572.9V1043.9H574.5V1072.8H576.1V1065.6H577.7V1058.3H579.3V1043.9H580.9V1072.8H582.5V1065.6H584.1V1058.3H585.7V1065.6H587.3V1043.9H590.5V1065.6H593.7V1058.3H596.9V1072.8H598.5V1058.3H600.1V1051.1H603.3V1058.3H609.7V1065.6H611.3V1058.3H612.9V1065.6H616.1V1058.3H617.7V1043.9H619.3V1065.6H620.9V1058.3H622.5V1065.6H624.1V1051.1H625.7V1058.3H627.3V1065.6H628.9V1058.3H633.7V1065.6H636.9V1058.3H638.5V1051.1H640.1V1065.6H641.7V1051.1H643.3V1058.3H644.9V1065.6H646.5V1051.1H649.7V1058.3H651.3V1051.1H652.9V1065.6H657.7V1051.1H659.3V1065.6H660.9V1072.8H662.5V1065.6H664.1V1058.3H665.7V1051.1H667.3V1058.3H672.1V1051.1H676.9V1065.6H678.5V1051.1H680.1V1058.3H683.3V1065.6H684.9V1058.3H688.1V1072.8H689.7V1058.3H692.9V1043.9H696.1V1065.6H697.7V1043.9H699.3V1058.3H704.1V1051.1H708.9V1072.8H710.5V1051.1H712.1V1065.6H713.7V1051.1H716.9V1058.3H720.1V1065.6H721.7V1051.1H723.3V1065.6H729.7V1051.1H732.9V1058.3H734.5V1051.1H736.1V1058.3H737.7V1051.1H747.3V1058.3H750.5V1065.6H755.3V1058.3H756.9V1065.6H760.1V1058.3H761.7V1065.6H771.3V1043.9H774.5V1051.1H776.1V1058.3H777.7V1051.1H779.3V1065.6H780.9V1051.1H782.5V1072.8H784.1V1051.1H785.7V1065.6H788.9V1043.9H790.5V1058.3H792.1V1051.1H795.3V1058.3H796.9V1051.1H798.5V1080.0H800.1V1058.3H801.7V1065.6H803.3V1058.3H806.5V1072.8H809.7V1051.1H812.9V1080.0H814.5V1051.1H816.1V1058.3H819.3V1072.8H822.5V1058.3H827.3V1072.8H830.5V1065.6H832.1V1051.1H833.7V1058.3H835.3V1043.9H836.9V1058.3H838.5V1051.1H841.7V1058.3H851.3V1051.1H852.9V1058.3H856.1V1051.1H857.7V1065.6H859.3V1058.3H862.5V1043.9H864.1V1051.1H865.7V1065.6H868.9V1051.1H870.5V1043.9H873.7V1051.1H875.3V1058.3H878.5V1065.6H880.1V1051.1H881.7V1043.9H883.3V1051.1H886.5V1058.3H888.1V1065.6H891.3V1058.3H892.9V1043.9H894.5V1058.3H896.1V1065.6H897.7V1058.3H899.3V1043.9H900.9V1065.6H902.5V1058.3H904.1V1051.1H905.7V1065.6H907.3V1043.9H908.9V1058.3H910.5V1043.9H912.1V1051.1H913.7V1036.6H916.9V1051.1H918.5V1036.6H920.1V1043.9H924.9V1065.6H926.5V1043.9H928.1V1036.6H929.7V1043.9H932.9V1051.1H937.7V1043.9H939.3V1058.3H940.9V1029.4H942.5V1036.6H945.7V1051.1H947.3V1043.9H950.5V1051.1H953.7V1036.6H955.3V1058.3H956.9V1029.4H958.5V1051.1H960.1V1029.4H961.7V1022.2H963.3V1043.9H969.7V1029.4H972.9V1043.9H974.5V1036.6H977.7V1029.4H980.9V1058.3H982.5V1036.6H990.5V1029.4H992.1V1015.0H993.7V1022.2H995.3V1007.7H998.5V993.3H1001.7V1000.5H1003.3V978.8H1006.5V986.0H1009.7V993.3H1011.3V978.8H1012.9V986.0H1014.5V971.6H1016.1V986.0H1022.5V978.8H1024.1V986.0H1025.7V993.3H1027.3V986.0H1028.9V1000.5H1033.7V993.3H1036.9V986.0H1038.5V1000.5H1040.1V993.3H1041.7V978.8H1043.3V1000.5H1044.9V986.0H1046.5V1000.5H1048.1V986.0H1049.7V1000.5H1052.9V986.0H1054.5V1000.5H1056.1V1007.7H1057.7V986.0H1059.3V993.3H1067.3V1000.5H1068.9V986.0H1070.5V1000.5H1072.1V993.3H1076.9V986.0H1078.5V978.8H1080.1V993.3H1081.7V978.8H1083.3V986.0H1089.7V978.8H1091.3V986.0H1094.5V971.6H1096.1V986.0H1097.7V1000.5H1100.9V986.0H1102.5V978.8H1104.1V971.6H1105.7V986.0H1110.5V971.6H1113.7V993.3H1115.3V978.8H1118.5V986.0H1120.1V978.8H1121.7V986.0H1126.5V978.8H1129.7V964.3H1132.9V957.1H1134.5V986.0H1136.1V964.3H1137.7V971.6H1139.3V978.8H1142.5V986.0H1147.3V993.3H1148.9V971.6H1150.5V1000.5H1153.7V986.0H1158.5V993.3H1160.1V1007.7H1161.7V1015.0H1163.3V1000.5H1166.5V1015.0H1172.9V1007.7H1174.5V1022.2H1177.7V1015.0H1187.3V1007.7H1188.9V1029.4H1193.7V1015.0H1195.3V1029.4H1196.9V1022.2H1200.1V1036.6H1201.7V1029.4H1203.3V1022.2H1204.9V1015.0H1208.1V1029.4H1209.7V1022.2H1211.3V1036.6H1212.9V1022.2H1214.5V1036.6H1216.1V1022.2H1217.7V1029.4H1220.9V1036.6H1222.5V1015.0H1224.1V1036.6H1225.7V1051.1H1230.5V1036.6H1232.1V1022.2H1233.7V1043.9H1235.3V1036.6H1241.7V1022.2H1243.3V1036.6H1249.7V1022.2H1256.1V1043.9H1257.7V1036.6H1259.3V1043.9H1260.9V1036.6H1264.1V1022.2H1265.7V1043.9H1267.3V1022.2H1268.9V1036.6H1270.5V1043.9H1273.7V1036.6H1275.3V1022.2H1276.9V1043.9H1278.5V1022.2H1280.2V1043.9H1283.4V1022.2H1285.0V1058.3H1286.6V1043.9H1288.2V1022.2H1293.0V1036.6H1296.2V1022.2H1297.8V1036.6H1301.0V1022.2H1302.6V1036.6H1304.2V1043.9H1305.8V1022.2H1312.2V1043.9H1313.8V1036.6H1321.8V1022.2H1323.4V1036.6H1326.6V1043.9H1328.2V1036.6H1329.8V1043.9H1331.4V1022.2H1334.6V1007.7H1337.8V1015.0H1341.0V993.3H1345.8V1000.5H1347.4V986.0H1349.0V993.3H1350.6V971.6H1352.2V986.0H1357.0V978.8H1361.8V1007.7H1366.6V986.0H1368.2V971.6H1369.8V978.8H1374.6V986.0H1377.8V971.6H1379.4V986.0H1381.0V993.3H1382.6V986.0H1384.2V993.3H1385.8V1007.7H1393.8V1022.2H1395.4V1015.0H1397.0V1022.2H1401.8V1029.4H1403.4V1007.7H1405.0V1036.6H1409.8V1043.9H1411.4V1036.6H1413.0V1043.9H1414.6V1029.4H1416.2V1043.9H1417.8V1036.6H1419.4V1022.2H1421.0V1043.9H1422.6V1051.1H1429.0V1043.9H1430.6V1051.1H1433.8V1043.9H1438.6V1036.6H1440.2V1065.6H1443.4V1036.6H1445.0V1043.9H1446.6V1036.6H1448.2V1043.9H1449.8V1036.6H1454.6V1051.1H1456.2V1029.4H1457.8V1043.9H1461.0V1036.6H1462.6V1051.1H1464.2V1058.3H1465.8V1036.6H1467.4V1043.9H1469.0V1051.1H1470.6V1029.4H1473.8V1058.3H1477.0V1043.9H1478.6V1058.3H1480.2V1036.6H1481.8V1043.9H1483.4V1036.6H1486.6V1051.1H1489.8V1043.9H1491.4V1051.1H1493.0V1043.9H1494.6V1051.1H1496.2V1058.3H1497.8V1051.1H1499.4V1036.6H1501.0V1043.9H1502.6V1036.6H1505.8V1051.1H1510.6V1043.9H1515.4V1051.1H1518.6V1043.9H1523.4V1051.1H1525.0V1043.9H1526.6V1051.1H1528.2V1043.9H1529.8V1051.1H1531.4V1036.6H1533.0V1065.6H1536.2V1043.9H1539.4V1051.1H1542.6V1043.9H1544.2V1065.6H1545.8V1051.1H1547.4V1058.3H1549.0V1051.1H1552.2V1058.3H1553.8V1051.1H1555.4V1036.6H1558.6V1051.1H1560.2V1058.3H1568.2V1051.1H1569.8V1043.9H1573.0V1058.3H1574.6V1065.6H1582.6V1058.3H1584.2V1065.6H1585.8V1072.8H1587.4V1058.3H1589.0V1072.8H1592.2V1065.6H1593.8V1051.1H1595.4V1036.6H1597.0V1043.9H1601.8V1051.1H1613.0V1043.9H1614.6V1058.3H1617.8V1051.1H1619.4V1036.6H1621.0V1058.3H1624.2V1051.1H1625.8V1065.6H1629.0V1058.3H1630.6V1029.4H1632.2V1051.1H1633.8V1036.6H1635.4V1051.1H1637.0V1029.4H1638.6V1043.9H1640.2V1051.1H1643.4V1043.9H1646.6V1036.6H1651.4V1051.1H1653.0V1043.9H1654.6V1029.4H1657.8V1036.6H1664.2V1029.4H1667.4V1051.1H1669.0V1043.9H1670.6V1036.6H1672.2V1029.4H1673.8V1036.6H1675.4V1029.4H1677.0V1043.9H1678.6V1036.6H1683.4V1029.4H1685.0V1036.6H1686.6V1051.1H1688.2V1029.4H1693.0V1036.6H1697.8V1043.9H1701.0V1051.1H1702.6V1022.2H1705.8V1029.4H1709.0V1036.6H1710.6V1029.4H1712.2V1043.9H1713.8V1058.3H1715.4V1036.6H1720.2V1029.4H1721.8V1036.6H1723.4V1029.4H1725.0V1036.6H1726.6V1029.4H1728.2V1051.1H1729.8V1036.6H1733.0V1029.4H1741.0V1022.2H1742.6V1036.6H1749.0V1029.4H1752.2V1036.6H1757.0V1022.2H1758.6V1029.4H1761.8V1036.6H1763.4V1043.9H1765.0V1029.4H1766.6V1015.0H1768.2V1036.6H1773.0V1043.9H1774.6V1022.2H1777.8V1029.4H1779.4V1036.6H1781.0V1029.4H1785.8V1022.2H1787.4V1036.6H1789.0V1022.2H1790.6V1029.4H1792.2V1022.2H1793.8V1029.4H1795.4V1036.6H1801.8V1029.4H1803.4V1022.2H1805.0V1015.0H1811.4V1022.2H1813.0V1015.0H1817.8V1022.2H1825.8V1029.4H1827.4V1015.0H1830.6V1007.7H1832.2V1029.4H1835.4V1022.2H1838.6V1029.4H1840.2V1015.0H1841.8V1007.7H1843.4V1029.4H1846.6V1015.0H1848.2V1022.2H1849.8V1007.7H1851.4V1029.4H1857.8V1007.7H1859.4V1029.4H1861.0V1015.0H1862.6V1029.4H1867.4V1022.2H1869.0V1036.6H1870.6V1015.0H1872.2V1007.7H1873.8V1029.4H1875.4V1007.7H1877.0V1015.0H1880.2V1029.4H1885.0V1043.9H1886.6V1036.6H1888.2V1029.4H1891.4V1015.0H1894.6V1036.6H1896.2V1007.7H1897.8V1036.6H1899.4V1029.4H1901.0V1022.2H1904.2V1029.4H1905.8V1022.2H1907.4V1015.0H1909.0V1029.4H1910.6V1022.2H1913.8V1015.0H1915.4V1029.4H1917.0V1015.0H1921.8V1036.6H1923.4V1022.2H1926.6V1015.0H1929.8V1022.2H1931.4V1029.4H1933.0V1022.2H1934.6V1036.6H1936.2V1029.4H1937.8V1036.6H1939.4V1022.2H1941.0V1015.0H1945.8V1029.4H1947.4V1015.0H1949.0V1022.2H1953.8V1029.4H1955.4V1015.0H1963.4V1022.2H1965.0V1029.4H1966.6V1015.0H1968.2V1036.6H1969.8V1022.2H1973.0V1029.4H1977.8V1022.2H1979.4V1029.4H1981.0V1015.0H1984.2V1029.4H1985.8V1007.7H1987.4V1043.9H1989.0V1022.2H1990.6V1015.0H1992.2V1036.6H1993.8V1015.0H1998.6V1029.4H2000.2V1022.2H2001.8V1029.4H2003.4V1036.6H2005.0V1029.4H2006.6V1015.0H2008.2V1029.4H2009.8V1043.9H2011.4V1029.4H2013.0V1022.2H2016.2V1029.4H2017.8V1022.2H2021.0V1036.6H2022.6V1007.7H2024.2V1036.6H2025.8V1029.4H2029.0V1015.0H2030.6V1022.2H2035.4V1015.0H2037.0V1036.6H2040.2V1022.2H2041.8V1036.6H2043.4V1022.2H2045.0V1015.0H2046.6V1029.4H2051.4V1036.6H2054.6V1043.9H2056.2V1015.0H2057.8V1029.4H2061.1V1043.9H2062.7V1036.6H2064.3V1029.4H2065.9V1043.9H2067.5V1036.6H2069.1V1022.2H2070.7V1029.4H2073.9V1022.2H2077.1V1036.6H2078.7V1022.2H2080.3V1036.6H2081.9V1043.9H2083.5V1029.4H2085.1V1022.2H2086.7V1029.4H2088.3V1015.0H2089.9V1029.4H2094.7V1022.2H2099.5V1051.1H2101.1V1029.4H2110.7V1036.6H2115.5V1043.9H2117.1V1051.1H2118.7V1043.9H2120.3V1022.2H2125.1V1043.9H2128.3V1029.4H2133.1V1036.6H2134.7V1043.9H2136.3V1051.1H2137.9V1029.4H2139.5V1043.9H2141.1V1036.6H2144.3V1043.9H2145.9V1036.6H2147.5V1029.4H2149.1V1036.6H2150.7V1043.9H2152.3V1036.6H2153.9V1029.4H2155.5V1058.3H2157.1V1065.6H2158.7V1036.6H2161.9V1051.1H2165.1V1058.3H2169.9V1051.1H2171.5V1058.3H2174.7V1051.1H2176.3V1058.3H2182.7V1065.6H2185.9V1051.1H2190.7V1065.6H2192.3V1051.1H2193.9V1058.3H2195.5V1065.6H2197.1V1072.8H2198.7V1051.1H2200.3V1058.3H2201.9V1051.1H2206.7V1058.3H2208.3V1065.6H2209.9V1058.3H2211.5V1065.6H2213.1V1051.1H2216.3V1065.6H2217.9V1051.1H2221.1V1072.8H2224.3V1065.6H2227.5V1051.1H2229.1V1043.9H2230.7V1058.3H2232.3V1065.6H2233.9V1058.3H2235.5V1080.0H2237.1V1072.8H2238.7V1058.3H2240.3V1043.9H2241.9V1065.6H2243.5V1058.3H2245.1V1065.6H2246.7V1072.8H2248.3V1058.3H2249.9V1051.1H2251.5V1065.6H2253.1V1043.9H2254.7V1058.3H2257.9V1051.1H2259.5V1058.3H2261.1V1051.1H2262.7V1065.6H2265.9V1072.8H2267.5V1051.1H2270.7V1058.3H2272.3V1051.1H2277.1V1065.6H2278.7V1051.1H2280.3V1065.6H2281.9V1058.3H2285.1V1051.1H2289.9V1065.6H2291.5V1058.3H2293.1V1051.1H2294.7V1043.9H2296.3V1058.3H2297.9V1036.6H2299.5V1043.9H2304.3V1058.3H2305.9V1051.1H2309.1V1043.9H2310.7V1051.1H2312.3V1036.6H2313.9V1043.9H2315.5V1036.6H2318.7V1058.3H2321.9V1036.6H2323.5V1043.9H2325.1V1036.6H2328.3V1043.9H2329.9V1029.4H2331.5V1043.9H2341.1V1036.6H2344.3V1022.2H2345.9V1029.4H2349.1V1036.6H2350.7V1029.4H2353.9V1022.2H2355.5V1051.1H2358.7V1029.4H2360.3V1043.9H2365.1V1036.6H2366.7V1051.1H2368.3V1036.6H2369.9V1051.1H2371.5V1043.9H2373.1V1051.1H2374.7V1036.6H2376.3V1051.1H2377.9V1043.9H2381.1V1051.1H2382.7V1043.9H2389.1V1036.6H2393.9V1051.1H2395.5V1036.6H2397.1V1051.1H2398.7V1036.6H2400.3V1043.9H2403.5V1051.1H2405.1V1036.6H2406.7V1051.1H2408.3V1029.4H2409.9V1043.9H2411.5V1051.1H2414.7V1036.6H2416.3V1051.1H2417.9V1036.6H2419.5V1043.9H2422.7V1036.6H2424.3V1051.1H2425.9V1043.9H2427.5V1036.6H2429.1V1051.1H2430.7V1036.6H2432.3V1043.9H2433.9V1058.3H2435.5V1036.6H2437.1V1051.1H2438.7V1036.6H2440.3V1043.9H2441.9V1058.3H2443.5V1036.6H2446.7V1051.1H2448.3V1058.3H2449.9V1043.9H2451.5V1051.1H2453.1V1058.3H2456.3V1065.6H2457.9V1043.9H2459.5V1051.1H2461.1V1043.9H2462.7V1051.1H2464.3V1065.6H2467.5V1058.3H2472.3V1051.1H2473.9V1036.6H2475.5V1051.1H2478.7V1058.3H2480.3V1036.6H2481.9V1051.1H2483.5V1058.3H2485.1V1051.1H2486.7V1058.3H2488.3V1051.1H2489.9V1058.3H2491.5V1036.6H2493.1V1065.6H2494.7V1036.6H2496.3V1043.9H2497.9V1072.8H2499.5V1036.6H2501.1V1058.3H2502.7V1043.9H2504.3V1036.6H2505.9V1065.6H2507.5V1036.6H2509.1V1058.3H2513.9V1051.1H2515.5V1036.6H2518.7V1043.9H2526.7V1058.3H2528.3V1043.9H2529.9V1051.1H2531.5V1036.6H2533.1V1043.9H2536.3V1051.1H2539.5V1043.9H2542.7V1058.3H2544.3V1051.1H2545.9V1036.6H2547.5V1051.1H2549.1V1043.9H2550.7V1072.8H2552.3V1051.1H2555.5V1058.3H2557.1V1051.1H2558.7V1058.3H2561.9V1043.9H2566.7V1058.3H2568.3V1043.9H2569.9V1051.1H2579.5V1043.9H2581.1V1058.3H2582.7V1043.9H2584.3V1036.6H2587.5V1043.9H2589.1V1058.3H2590.7V1065.6H2593.9V1051.1H2595.5V1036.6H2597.1V1043.9H2598.7V1065.6H2600.3V1051.1H2601.9V1058.3H2603.5V1051.1H2605.1V1058.3H2613.1V1065.6H2614.7V1058.3H2616.3V1043.9H2617.9V1051.1H2625.9V1058.3H2627.5V1043.9H2629.1V1058.3H2630.7V1051.1H2632.3V1043.9H2633.9V1072.8H2635.5V1051.1H2637.1V1043.9H2638.7V1058.3H2640.3V1043.9H2643.5V1051.1H2645.1V1058.3H2646.7V1043.9H2649.9V1051.1H2651.5V1043.9H2657.9V1051.1H2659.5V1036.6H2661.1V1058.3H2662.7V1051.1H2665.9V1043.9H2667.5V1051.1H2669.1V1036.6H2670.7V1043.9H2672.3V1058.3H2673.9V1043.9H2675.5V1051.1H2677.1V1065.6H2678.7V1043.9H2680.3V1051.1H2689.9V1043.9H2694.7V1051.1H2696.3V1036.6H2697.9V1043.9H2701.1V1051.1H2702.7V1036.6H2704.3V1043.9H2707.5V1022.2H2709.1V1029.4H2712.3V1022.2H2715.5V1036.6H2718.7V1029.4H2720.3V1036.6H2721.9V1022.2H2723.5V1015.0H2725.1V1007.7H2728.3V1015.0H2731.5V1022.2H2734.7V1007.7H2737.9V1015.0H2739.5V1022.2H2741.1V1015.0H2744.3V1022.2H2745.9V1015.0H2747.5V1007.7H2752.3V1022.2H2753.9V1007.7H2755.5V1022.2H2758.7V1007.7H2760.3V1015.0H2761.9V1022.2H2766.7V1015.0H2768.3V1007.7H2769.9V1022.2H2771.5V1007.7H2773.1V1022.2H2774.7V1007.7H2776.3V1022.2H2777.9V1015.0H2779.5V1036.6H2781.1V1015.0H2789.1V1022.2H2790.7V1036.6H2792.3V1022.2H2793.9V1015.0H2795.5V1029.4H2798.7V1022.2H2800.3V1029.4H2803.5V1015.0H2805.1V1022.2H2811.5V1015.0H2813.1V1022.2H2814.7V1036.6H2817.9V1022.2H2819.5V1029.4H2821.1V1022.2H2824.3V1029.4H2825.9V1022.2H2827.5V1029.4H2830.7V1015.0H2832.3V1022.2H2835.5V1029.4H2840.4V1022.2H2843.6V1051.1H2845.2V1029.4H2846.8V1036.6H2848.4V1022.2H2850.0V1036.6H2854.8V1022.2H2859.6V1036.6H2861.2V1015.0H2864.4V1029.4H2866.0V1015.0H2867.6V1007.7H2869.2V1015.0H2870.8V1007.7H2874.0V993.3H2875.6V986.0H2877.2V1007.7H2880.4V993.3H2885.2V986.0H2886.8V993.3H2888.4V986.0H2890.0V993.3H2893.2V986.0H2896.4V1000.5H2902.8V993.3H2906.0V986.0H2909.2V1000.5H2912.4V986.0H2914.0V993.3H2915.6V1000.5H2917.2V986.0H2920.4V1007.7H2922.0V1000.5H2923.6V1007.7H2926.8V993.3H2928.4V1000.5H2931.6V1007.7H2933.2V1000.5H2934.8V993.3H2936.4V1000.5H2938.0V993.3H2939.6V1000.5H2941.2V1015.0H2942.8V1007.7H2947.6V1000.5H2949.2V993.3H2950.8V1022.2H2952.4V1007.7H2957.2V1000.5H2958.8V993.3H2960.4V1015.0H2962.0V1007.7H2963.6V1000.5H2965.2V1015.0H2966.8V1007.7H2968.4V1000.5H2970.0V1007.7H2971.6V993.3H2974.8V1000.5H2978.0V986.0H2979.6V1000.5H2982.8V1015.0H2986.0V1000.5H2987.6V993.3H2989.2V1007.7H2990.8V993.3H2992.4V1000.5H2997.2V1007.7H3000.4V1015.0H3003.6V1007.7H3005.2V1000.5H3010.0V1007.7H3011.6V1000.5H3013.2V986.0H3014.8V1007.7H3018.0V993.3H3019.6V986.0H3021.2V1015.0H3022.8V986.0H3024.4V978.8H3026.0V986.0H3027.6V978.8H3029.2V1000.5H3030.8V986.0H3032.4V971.6H3034.0V978.8H3035.6V957.1H3037.2V1000.5H3038.8V964.3H3048.4V971.6H3050.0V957.1H3054.8V935.4H3056.4V928.2H3059.6V957.1H3061.2V935.4H3064.4V921.0H3066.0V935.4H3069.2V942.7H3072.4V921.0H3075.6V906.5H3077.2V935.4H3080.4V964.3H3082.0V906.5H3085.2V921.0H3086.8V942.7H3088.4V949.9H3091.6V942.7H3093.2V971.6H3094.8V935.4H3096.4V942.7H3098.0V957.1H3099.6V942.7H3101.2V935.4H3102.8V928.2H3104.4V942.7H3106.0V928.2H3107.6V957.1H3109.2V942.7H3112.4V949.9H3114.0V928.2H3115.6V913.7H3117.2V942.7H3118.8V971.6H3120.4V957.1H3122.0V942.7H3123.6V935.4H3126.8V942.7H3130.0V928.2H3131.6V942.7H3133.2V971.6H3134.8V942.7H3136.4V949.9H3138.0V935.4H3141.2V949.9H3142.8V964.3H3144.4V957.1H3146.0V964.3H3149.2V957.1H3150.8V971.6H3152.4V942.7H3154.0V964.3H3155.6V957.1H3157.2V964.3H3158.8V971.6H3160.4V957.1H3168.4V949.9H3170.0V957.1H3171.6V964.3H3176.4V949.9H3178.0V971.6H3179.6V964.3H3181.2V971.6H3184.4V964.3H3186.0V978.8H3189.2V993.3H3190.8V986.0H3194.0V993.3H3198.8V978.8H3200.4V993.3H3202.0V986.0H3206.8V1007.7H3208.4V1000.5H3211.6V1007.7H3213.2V993.3H3214.8V1000.5H3216.4V1022.2H3219.6V1015.0H3221.2V1000.5H3224.4V1015.0H3226.0V1036.6H3226.0"/>
</g>
<text transform="translate(40.4 761.0) rotate(-90)" text-anchor="middle" font-size="24" fill="#b3b3b3" font-family='Liberation Sans, sans-serif' letter-spacing="1.25">µg/m³</text>
</svg>
<div class="t" id="title" style="top:18.87px;font-size:34.30px;color:#e3e1e6;letter-spacing:1.017px;left:140.20px;">History</div>
<div class="t" id="sl" style="top:152.26px;font-size:20.60px;color:#9c9c9f;letter-spacing:0.522px;left:107.20px;">Start date</div>
<div class="t" id="sv" style="top:182.21px;font-size:27.40px;color:#e6e5ea;letter-spacing:0.500px;left:108.20px;">January 29, 2024 at 12:00 AM</div>
<div class="t" id="el" style="top:152.26px;font-size:20.60px;color:#9c9c9f;letter-spacing:0.229px;left:562.80px;">End date</div>
<div class="t" id="ev" style="top:182.21px;font-size:27.40px;color:#e6e5ea;letter-spacing:0.478px;left:564.80px;">January 31, 2024 at 12:00 AM</div>
<div class="t" id="c1" style="top:161.38px;font-size:24.00px;color:#211f1c;letter-spacing:0.200px;left:1079.70px;">Choose area</div>
<div class="t" id="c2" style="top:161.38px;font-size:24.00px;color:#1a2226;letter-spacing:0.500px;left:1329.70px;">Choose device</div>
<div class="t" id="c3" style="top:161.38px;font-size:24.00px;color:#1d2019;letter-spacing:0.625px;left:1602.50px;">Choose entity</div>
<div class="t" id="e1" style="top:257.43px;font-size:24.00px;color:#e6e5ea;letter-spacing:0.278px;left:1084.40px;">SDS011 2.5</div>
<div class="t" id="e2" style="top:257.43px;font-size:24.00px;color:#e6e5ea;letter-spacing:0.264px;left:1363.10px;">SDS011 10</div>
<div class="t" id="l1" style="top:338.81px;font-size:27.40px;color:#b8b8b8;letter-spacing:-0.210px;left:1486.90px;">SDS011 2.5</div>
<div class="t" id="l2" style="top:338.81px;font-size:27.40px;color:#b8b8b8;letter-spacing:-0.161px;left:1707.80px;">SDS011 10</div>
<div class="t" id="y10" style="top:385.78px;font-size:24.00px;color:#b3b3b3;letter-spacing:0.500px;left:90.20px;width:0;display:flex;justify-content:flex-end;">10</div>
<div class="t" id="y8" style="top:530.78px;font-size:24.00px;color:#b3b3b3;left:89.70px;width:0;display:flex;justify-content:flex-end;">8</div>
<div class="t" id="y6" style="top:675.78px;font-size:24.00px;color:#b3b3b3;left:89.70px;width:0;display:flex;justify-content:flex-end;">6</div>
<div class="t" id="y4" style="top:819.78px;font-size:24.00px;color:#b3b3b3;left:88.70px;width:0;display:flex;justify-content:flex-end;">4</div>
<div class="t" id="y2" style="top:964.78px;font-size:24.00px;color:#b3b3b3;left:89.70px;width:0;display:flex;justify-content:flex-end;">2</div>
<div class="t" id="y0" style="top:1108.78px;font-size:24.00px;color:#b3b3b3;left:89.70px;width:0;display:flex;justify-content:flex-end;">0</div>
<div class="t" id="x0" style="top:1145.58px;font-size:24.00px;color:#b3b3b3;font-weight:700;letter-spacing:-0.580px;left:112.21px;width:0;display:flex;justify-content:center;">Jan 29</div>
<div class="t" id="x1" style="top:1145.58px;font-size:24.00px;color:#b3b3b3;letter-spacing:0.249px;left:247.80px;width:0;display:flex;justify-content:center;">2:00 AM</div>
<div class="t" id="x2" style="top:1145.58px;font-size:24.00px;color:#b3b3b3;letter-spacing:-0.084px;left:383.30px;width:0;display:flex;justify-content:center;">4:00 AM</div>
<div class="t" id="x3" style="top:1145.58px;font-size:24.00px;color:#b3b3b3;letter-spacing:0.249px;left:519.14px;width:0;display:flex;justify-content:center;">6:00 AM</div>
<div class="t" id="x4" style="top:1145.58px;font-size:24.00px;color:#b3b3b3;letter-spacing:0.249px;left:654.33px;width:0;display:flex;justify-content:center;">8:00 AM</div>
<div class="t" id="x5" style="top:1145.58px;font-size:24.00px;color:#b3b3b3;letter-spacing:0.086px;left:788.92px;width:0;display:flex;justify-content:center;">10:00 AM</div>
<div class="t" id="x6" style="top:1145.58px;font-size:24.00px;color:#b3b3b3;letter-spacing:-0.056px;left:924.52px;width:0;display:flex;justify-content:center;">12:00 PM</div>
<div class="t" id="x7" style="top:1145.58px;font-size:24.00px;color:#b3b3b3;letter-spacing:-0.083px;left:1060.18px;width:0;display:flex;justify-content:center;">2:00 PM</div>
<div class="t" id="x8" style="top:1145.58px;font-size:24.00px;color:#b3b3b3;letter-spacing:-0.249px;left:1195.77px;width:0;display:flex;justify-content:center;">4:00 PM</div>
<div class="t" id="x9" style="top:1145.58px;font-size:24.00px;color:#b3b3b3;letter-spacing:-0.083px;left:1331.02px;width:0;display:flex;justify-content:center;">6:00 PM</div>
<div class="t" id="x10" style="top:1145.58px;font-size:24.00px;color:#b3b3b3;letter-spacing:-0.083px;left:1466.19px;width:0;display:flex;justify-content:center;">8:00 PM</div>
<div class="t" id="x11" style="top:1145.58px;font-size:24.00px;color:#b3b3b3;letter-spacing:-0.056px;left:1601.38px;width:0;display:flex;justify-content:center;">10:00 PM</div>
<div class="t" id="x12" style="top:1145.58px;font-size:24.00px;color:#b3b3b3;font-weight:700;letter-spacing:-0.580px;left:1736.81px;width:0;display:flex;justify-content:center;">Jan 30</div>
<div class="t" id="x13" style="top:1145.58px;font-size:24.00px;color:#b3b3b3;letter-spacing:0.084px;left:1872.81px;width:0;display:flex;justify-content:center;">2:00 AM</div>
<div class="t" id="x14" style="top:1145.58px;font-size:24.00px;color:#b3b3b3;letter-spacing:0.083px;left:2007.98px;width:0;display:flex;justify-content:center;">4:00 AM</div>
<div class="t" id="x15" style="top:1145.58px;font-size:24.00px;color:#b3b3b3;letter-spacing:0.084px;left:2143.15px;width:0;display:flex;justify-content:center;">6:00 AM</div>
<div class="t" id="x16" style="top:1145.58px;font-size:24.00px;color:#b3b3b3;letter-spacing:0.083px;left:2278.82px;width:0;display:flex;justify-content:center;">8:00 AM</div>
<div class="t" id="x17" style="top:1145.58px;font-size:24.00px;color:#b3b3b3;letter-spacing:0.087px;left:2414.00px;width:0;display:flex;justify-content:center;">10:00 AM</div>
<div class="t" id="x18" style="top:1145.58px;font-size:24.00px;color:#b3b3b3;letter-spacing:-0.056px;left:2549.10px;width:0;display:flex;justify-content:center;">12:00 PM</div>
<div class="t" id="x19" style="top:1145.58px;font-size:24.00px;color:#b3b3b3;letter-spacing:-0.084px;left:2684.75px;width:0;display:flex;justify-content:center;">2:00 PM</div>
<div class="t" id="x20" style="top:1145.58px;font-size:24.00px;color:#b3b3b3;letter-spacing:-0.084px;left:2820.94px;width:0;display:flex;justify-content:center;">4:00 PM</div>
<div class="t" id="x21" style="top:1145.58px;font-size:24.00px;color:#b3b3b3;letter-spacing:-0.083px;left:2955.62px;width:0;display:flex;justify-content:center;">6:00 PM</div>
<div class="t" id="x22" style="top:1145.58px;font-size:24.00px;color:#b3b3b3;letter-spacing:-0.083px;left:3090.79px;width:0;display:flex;justify-content:center;">8:00 PM</div>
<div class="t" id="x23" style="top:1145.58px;font-size:24.00px;color:#b3b3b3;letter-spacing:-0.056px;left:3225.97px;width:0;display:flex;justify-content:center;">10:00 PM</div>
</div></body></html>
